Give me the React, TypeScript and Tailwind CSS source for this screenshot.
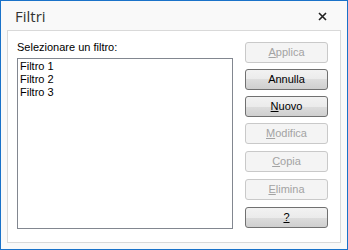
import React from "react";

const font = { fontFamily: '"Liberation Sans", Arial, sans-serif' };

function Btn({
  label,
  u,
  disabled,
  className = "",
}: {
  label: string;
  u?: number;
  disabled?: boolean;
  className?: string;
}) {
  const chars =
    u === undefined ? (
      label
    ) : (
      <>
        {label.slice(0, u)}
        <span className="underline underline-offset-1">{label[u]}</span>
        {label.slice(u + 1)}
      </>
    );
  return (
    <div
      className={
        "w-[83px] h-[21px] rounded-[3px] border flex items-center justify-center text-[11px] leading-[13px] " +
        (disabled
          ? "border-[#c9c9c9] bg-[#f4f4f4] text-[#a3a3a3] "
          : "border-[#707070] bg-[linear-gradient(#f2f2f2_0%,#ebebeb_50%,#dddddd_50%,#cfcfcf_100%)] text-black ") +
        className
      }
    >
      {chars}
    </div>
  );
}

export default function App() {
  return (
    <div
      className="w-[348px] h-[250px] border border-[#1a72c9] bg-[#f9f9f9] flex flex-col"
      style={font}
    >
      <div className="h-[29px] flex items-center justify-between pl-[14px] pr-[20px]">
        <span
          className="text-[15px] text-[#333] leading-none mt-[1px]"
          style={{ fontFamily: '"Open Sans", "Noto Sans", sans-serif' }}
        >
          Filtri
        </span>
        <svg width="9" height="9" viewBox="0 0 9 9" className="mt-[2px]">
          <path d="M1 1L8 8M8 1L1 8" stroke="#222" strokeWidth="1.6" />
        </svg>
      </div>
      <div className="mx-[6px] mb-[6px] flex-1 border border-[#d9d9d9] bg-white flex">
        <div className="pl-[9px] pt-[10px] flex flex-col">
          <div className="text-[11px] leading-[13px] text-black h-[13px]">
            Selezionare un filtro:
          </div>
          <div className="mt-[4px] w-[216px] h-[171px] border border-[#828790] bg-white pl-[2px] pt-[1px] text-[11px] leading-[13px] text-black">
            <div>Filtro 1</div>
            <div>Filtro 2</div>
            <div>Filtro 3</div>
          </div>
        </div>
        <div className="ml-[12px] pt-[11px] flex flex-col">
          <Btn label="Applica" u={0} disabled />
          <Btn label="Annulla" className="mt-[6px]" />
          <Btn label="Nuovo" u={0} className="mt-[6px]" />
          <Btn label="Modifica" u={0} disabled className="mt-[6px]" />
          <Btn label="Copia" u={0} disabled className="mt-[7px]" />
          <Btn label="Elimina" u={0} disabled className="mt-[7px]" />
          <Btn label="?" u={0} className="mt-[7px]" />
        </div>
      </div>
    </div>
  );
}
